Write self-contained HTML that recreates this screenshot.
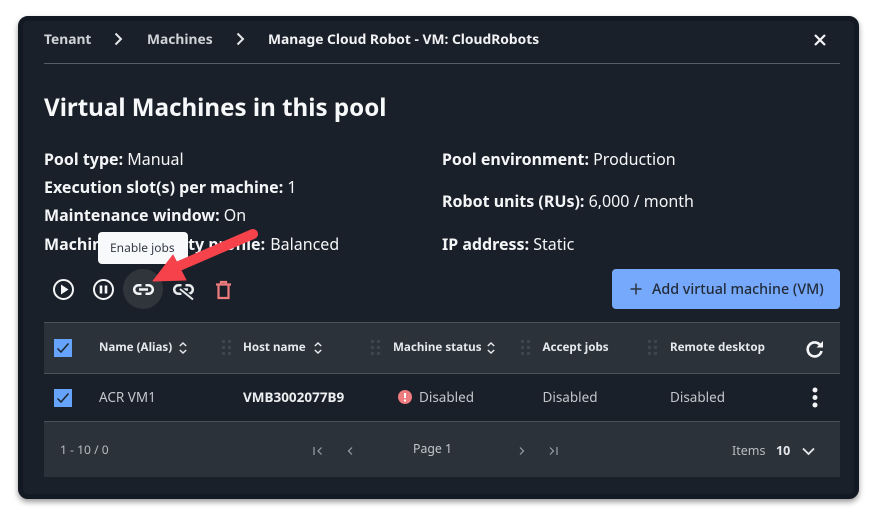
<!DOCTYPE html>
<html><head><meta charset="utf-8">
<style>
*{box-sizing:border-box}
html,body{margin:0;padding:0;background:#fff;width:882px;height:519px;overflow:hidden}
body{position:relative;font-family:"Noto Sans","Noto Sans CJK JP","DejaVu Sans",sans-serif;color:#f4f5f7}
.m{position:absolute;left:18px;top:16px;width:841px;height:483px;background:#1a2029;border:5px solid #121923;border-radius:10px;box-shadow:0 3px 6px rgba(0,0,0,.4)}
.t{position:absolute;white-space:nowrap;line-height:20px}
.b{font-weight:700}
.bc{font-size:13.8px;font-weight:700;top:30px;color:#cfd3d8}
.i{font-size:16px;color:#f4f5f7}
.i b{font-weight:700}
.th{font-size:11.6px;font-weight:700;top:338px;color:#e6e8eb}
.td{font-size:13.5px;top:387px;color:#c3c7cc}
svg{position:absolute;overflow:visible}
.box{position:absolute;left:54px;width:18px;height:18px;background:#66a3fa}
</style></head>
<body>
<div class="m"></div>
<div class="t bc" style="left:44px">Tenant</div>
<svg style="left:113px;top:32px" width="12" height="14" fill="none" stroke="#e4e6e9" stroke-width="2"><path d="M2.500 1.500 8 7l-5.500 5.500"/></svg>
<div class="t bc" style="left:147px">Machines</div>
<svg style="left:235px;top:32px" width="12" height="14" fill="none" stroke="#e4e6e9" stroke-width="2"><path d="M2.500 1.500 8 7l-5.500 5.500"/></svg>
<div class="t bc" style="left:268px;color:#f1f2f4">Manage Cloud Robot - VM: CloudRobots</div>
<svg style="left:814px;top:34px" width="12" height="12" fill="none" stroke="#f4f5f7" stroke-width="2.200"><path d="M1 1l10 10M11 1 1 11"/></svg>
<div style="position:absolute;left:44px;top:63px;width:796px;height:1px;background:#565c65"></div>
<div class="t b" style="left:44px;top:93px;font-size:24.15px;line-height:30px;color:#f7f8f9">Virtual Machines in this pool</div>

<div class="t i" style="left:44px;top:149px"><b>Pool type:</b> Manual</div>
<div class="t i" style="left:44px;top:177px"><b>Execution slot(s) per machine:</b> 1</div>
<div class="t i" style="left:44px;top:205px"><b>Maintenance window:</b> On</div>
<div class="t i" style="left:44px;top:234px"><b>Machine availability profile:</b> <span style="margin-left:1px">Balanced</span></div>
<div class="t i" style="left:442px;top:149px"><b>Pool environment:</b> Production</div>
<div class="t i" style="left:442px;top:191px"><b>Robot units (RUs):</b> 6,000 / month</div>
<div class="t i" style="left:442px;top:234px"><b>IP address:</b> Static</div>

<div style="position:absolute;left:98px;top:232px;width:90px;height:32px;background:#f8f9fb;border-radius:4px"></div>
<div class="t" style="left:110px;top:238px;font-size:12px;color:#333a44">Enable jobs</div>

<svg style="left:53px;top:279px" width="21" height="21" fill="none" stroke="#f4f5f7" stroke-width="2"><circle cx="10.500" cy="10.500" r="9.500"/><path d="M8 5.500v10l7.500-5z" fill="#f4f5f7" stroke="none"/></svg>
<svg style="left:93px;top:279px" width="21" height="21" fill="none" stroke="#f4f5f7" stroke-width="2"><circle cx="10.500" cy="10.500" r="9.500"/><path d="M8 6.500v8M13 6.500v8" stroke-width="2.600"/></svg>
<div style="position:absolute;left:123px;top:269px;width:40px;height:40px;border-radius:50%;background:#30353c"></div>
<svg style="left:133px;top:284px" width="21" height="12" fill="none" stroke="#f4f5f7" stroke-width="2.500"><path d="M8.500 1.200H5.500a4.300 4.300 0 0 0 0 8.600h3M12.500 1.200h3a4.300 4.300 0 0 1 0 8.600h-3M6 5.500h9"/></svg>
<svg style="left:173px;top:284px" width="21" height="16" fill="none" stroke="#e8e9eb" stroke-width="2.500"><path d="M8.500 1.200H5.500a4.300 4.300 0 0 0 0 8.600h3M12.500 1.200h3a4.300 4.300 0 0 1 0 8.600h-3M6 5.500h9"/><path d="M6 4 20 16" stroke="#1a2029" stroke-width="5"/><path d="M7 5 20 15.500" stroke-width="2"/></svg>
<svg style="left:216px;top:281px" width="15" height="18" fill="none" stroke="#ee7b7d" stroke-width="2.200"><path d="M0 3.500h15M5 3V1h5v2M2.500 4v13h10V4"/></svg>

<svg style="left:0;top:0" width="882" height="519"><path d="M253 234 172 269" stroke="#f6424a" stroke-width="10" stroke-linecap="round" fill="none"/><path d="M153 281 173 255 186 280z" fill="#f6424a" stroke="#f6424a" stroke-width="1" stroke-linejoin="round"/></svg>

<div style="position:absolute;left:612px;top:269px;width:228px;height:40px;background:#76a9fb;border-radius:4px"></div>
<svg style="left:630px;top:283px" width="12" height="12" stroke="#2b3440" stroke-width="1.500"><path d="M6 .5v11M.5 6h11"/></svg>
<div class="t" style="left:652px;top:280px;font-size:14.3px;font-weight:500;color:#222c39">Add virtual machine (VM)</div>

<div style="position:absolute;left:44px;top:322px;width:796px;height:52px;background:#2b323a;border-top:1px solid #4c525a;border-bottom:1px solid #4c525a"></div>
<div style="position:absolute;left:44px;top:421px;width:796px;height:56px;background:#2b323a;border-top:1px solid #4c525a"></div>

<div class="box" style="top:339px"></div>
<svg style="left:57px;top:343px" width="12" height="10" fill="none" stroke="#1c2530" stroke-width="1.500"><path d="M.5 5.500 4 9l7.500-8.500"/></svg>
<div class="t th" style="left:99px">Name (Alias)</div>
<svg style="left:179px;top:342px" width="8" height="12" fill="none" stroke="#e6e8eb" stroke-width="1.500"><path d="M.8 4 4 1l3.200 3M.8 8 4 11l3.200-3"/></svg>
<div class="t th" style="left:243px">Host name</div>
<svg style="left:314px;top:342px" width="8" height="12" fill="none" stroke="#e6e8eb" stroke-width="1.500"><path d="M.8 4 4 1l3.200 3M.8 8 4 11l3.200-3"/></svg>
<div class="t th" style="left:393px">Machine status</div>
<svg style="left:487px;top:342px" width="8" height="12" fill="none" stroke="#e6e8eb" stroke-width="1.500"><path d="M.8 4 4 1l3.200 3M.8 8 4 11l3.200-3"/></svg>
<div class="t th" style="left:542.500px">Accept jobs</div>
<div class="t th" style="left:670px">Remote desktop</div>
<svg style="left:222px;top:340px" width="9" height="16" fill="#3e454d"><path d="M0 0h3v3H0zM6 0h3v3H6zM0 6h3v3H0zM6 6h3v3H6zM0 12h3v3H0zM6 12h3v3H6z"/></svg>
<svg style="left:371px;top:340px" width="9" height="16" fill="#3e454d"><path d="M0 0h3v3H0zM6 0h3v3H6zM0 6h3v3H0zM6 6h3v3H6zM0 12h3v3H0zM6 12h3v3H6z"/></svg>
<svg style="left:521px;top:340px" width="9" height="16" fill="#3e454d"><path d="M0 0h3v3H0zM6 0h3v3H6zM0 6h3v3H0zM6 6h3v3H6zM0 12h3v3H0zM6 12h3v3H6z"/></svg>
<svg style="left:648px;top:340px" width="9" height="16" fill="#3e454d"><path d="M0 0h3v3H0zM6 0h3v3H6zM0 6h3v3H0zM6 6h3v3H6zM0 12h3v3H0zM6 12h3v3H6z"/></svg>
<svg style="left:806px;top:340px" width="18" height="18" fill="none" stroke="#f4f5f7" stroke-width="2.600"><path d="M14.500 5.500A7 7 0 1 0 15.500 11"/><path d="M17 1v6.500h-6.500z" fill="#f4f5f7" stroke="none"/></svg>

<div class="box" style="top:389px"></div>
<svg style="left:57px;top:393px" width="12" height="10" fill="none" stroke="#1c2530" stroke-width="1.500"><path d="M.5 5.500 4 9l7.500-8.500"/></svg>
<div class="t td" style="left:99px">ACR VM1</div>
<div class="t td b" style="left:243px;color:#eceef0">VMB3002077B9</div>
<svg style="left:398px;top:390px" width="14" height="14"><circle cx="7" cy="7" r="7" fill="#ee7b7d"/><path d="M6 3h2v5H6zM6 9.500h2v2H6z" fill="#fff"/></svg>
<div class="t td" style="left:419px">Disabled</div>
<div class="t td" style="left:542.500px">Disabled</div>
<div class="t td" style="left:670px">Disabled</div>
<svg style="left:812px;top:387px" width="6" height="21" fill="#f4f5f7"><circle cx="3" cy="3" r="2.500"/><circle cx="3" cy="10.500" r="2.500"/><circle cx="3" cy="18" r="2.500"/></svg>

<div class="t" style="left:60px;top:440px;font-size:12.100px;color:#b9bdc2">1 - 10 / 0</div>
<svg style="left:313px;top:446px" width="10" height="10" fill="none" stroke="#9aa0a7" stroke-width="1.200"><path d="M1 1v8M8.500 1.500 5 5l3.500 3.500"/></svg>
<svg style="left:346px;top:446px" width="8" height="10" fill="none" stroke="#9aa0a7" stroke-width="1.200"><path d="M6 1.500 2.500 5 6 8.500"/></svg>
<div class="t" style="left:413px;top:439px;font-size:12.300px;color:#c3c7cc">Page 1</div>
<svg style="left:518px;top:446px" width="8" height="10" fill="none" stroke="#9aa0a7" stroke-width="1.200"><path d="M2 1.500 5.500 5 2 8.500"/></svg>
<svg style="left:549px;top:446px" width="10" height="10" fill="none" stroke="#9aa0a7" stroke-width="1.200"><path d="M1 1.500 4.500 5 1 8.500M8 1v8"/></svg>
<div class="t" style="left:732px;top:441px;font-size:12.500px;color:#b9bdc2">Items</div>
<div class="t b" style="left:776px;top:441px;font-size:12.500px;color:#e6e8eb">10</div>
<svg style="left:802px;top:447px" width="13" height="9" fill="none" stroke="#e6e8eb" stroke-width="1.800"><path d="M1 1.500 6.500 7 12 1.500"/></svg>
</body></html>
